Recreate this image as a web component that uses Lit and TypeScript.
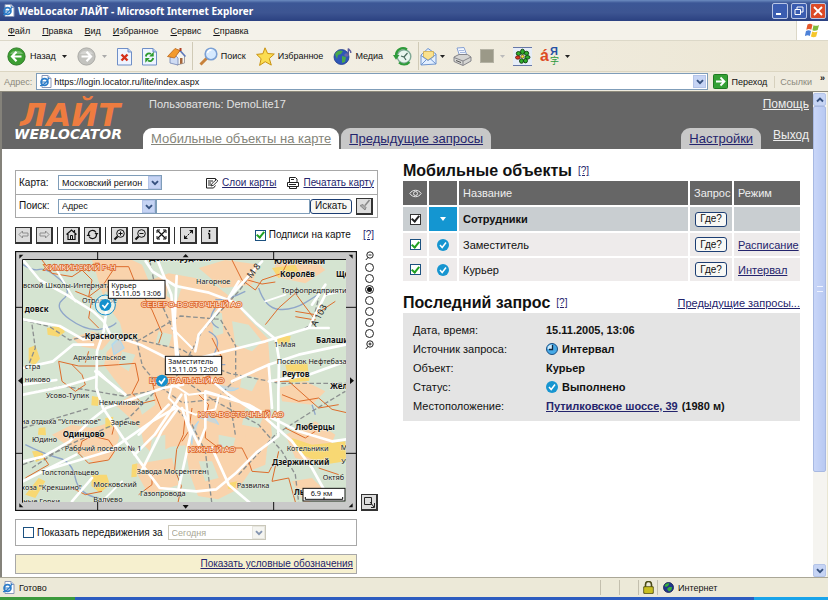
import { LitElement, html, css, svg } from "lit";
import { customElement, state } from "lit/decorators.js";
import { classMap } from "lit/directives/class-map.js";

/* ---------- browser icons ---------- */

const ieIcon = svg`<svg width="13" height="13" viewBox="0 0 13 13"><path d="M3 .5h6l3 3v9H3z" fill="#fff" stroke="#8a98b8"/><path d="M9 .5v3h3" fill="#dde6f5" stroke="#8a98b8"/><circle cx="5.500" cy="7" r="3.400" fill="none" stroke="#2b7cc9" stroke-width="1.800"/><path d="M3 7h5.500M1 10.500C4 11 9 6 10 2.500" fill="none" stroke="#2b7cc9" stroke-width="1.200"/></svg>`;

const circleArrow = (left: boolean) => svg`<svg width="19" height="19" viewBox="0 0 19 19"><circle cx="9.500" cy="9.500" r="8.600" fill=${left ? "#3d9f33" : "#c3c3bf"} stroke=${left ? "#2b7a24" : "#a9a9a5"}/><path d="M3 7a7 5 0 0 1 13 0z" fill="#fff" opacity=".3"/><path d=${left ? "M9.500 4.800 5 9.500l4.500 4.700M5.500 9.500h9" : "M9.500 4.800 14 9.500l-4.500 4.700M13.500 9.500h-9"} fill="none" stroke="#fff" stroke-width="2.200"/></svg>`;

const stopIcon = svg`<svg width="15" height="19" viewBox="0 0 15 19"><path d="M.5 1.500h10.500l3.500 3.500v13H.5z" fill="#eef4ff" stroke="#6f8fc7"/><path d="M11 1.500v3.500h3.500" fill="#b9cdf0" stroke="#6f8fc7"/><path d="m4.500 7.500 6 6m0-6-6 6" stroke="#d5301b" stroke-width="2.400"/></svg>`;
const refreshIcon = svg`<svg width="15" height="19" viewBox="0 0 15 19"><path d="M.5 1.500h10.500l3.500 3.500v13H.5z" fill="#eef4ff" stroke="#6f8fc7"/><path d="M11 1.500v3.500h3.500" fill="#b9cdf0" stroke="#6f8fc7"/><path d="M3.800 9.500c.5-3 3.200-3.800 5.200-2.500M11.200 11c-.5 3-3.200 3.800-5.200 2.500" fill="none" stroke="#2c9a2c" stroke-width="1.900"/><path d="M11.700 4.800v4.700H7.200zM3.300 15.700V11h4.500z" fill="#2c9a2c"/></svg>`;
const homeIcon = svg`<svg width="19" height="19" viewBox="0 0 19 19"><path d="M8 9 13 4l4.500 5v7L10 18z" fill="#f6f4ee" stroke="#8d8d96" stroke-width=".8"/><path d="M3 10.500 8 8l3 3v7l-8-2z" fill="#cfdcf4" stroke="#7285b5" stroke-width=".8"/><path d="M.5 9.500 8 1.500l5 2-5.500 7.500z" fill="#f39a2d" stroke="#b9651a" stroke-width=".8"/><path d="m13 3.500 5.500 6" stroke="#5a76bb" stroke-width="1.500"/><path d="M13 11h2.500v5.500L13 17z" fill="#a5663b"/><path d="M12.500 1h2v3h-2z" fill="#b04125"/></svg>`;
const searchIcon = svg`<svg width="19" height="19" viewBox="0 0 19 19"><path d="m8 11-6.500 6.500" stroke="#c8823c" stroke-width="3"/><circle cx="12" cy="7" r="5.800" fill="#d6eaff" stroke="#7ba0d4" stroke-width="1.600"/><path d="M8.500 6a3.800 3.800 0 0 1 4-3" fill="none" stroke="#fff" stroke-width="1.500"/></svg>`;
const starIcon = svg`<svg width="19" height="19" viewBox="0 0 19 19"><path d="m9 .8 2.600 5.700 6.700.5-5 4.500 2 6.600-6.100-3.400-5.600 3.700 1.500-6.700L.6 7.400l6.300-.7z" fill="#fbdd52" stroke="#c99313"/></svg>`;
const mediaIcon = svg`<svg width="19" height="19" viewBox="0 0 19 19"><circle cx="8.500" cy="10" r="7.500" fill="#2f57b8" stroke="#1e3c8a" stroke-width=".8"/><path d="M2 7c2-4 6-4 8-3l-2 3-3 1-1 4zM9 9l4 1-1 5-3 1z" fill="#48a84a"/><ellipse cx="13.500" cy="8" rx="2.200" ry="1.700" fill="#6a6aa6"/><path d="M15.300 8V1.500c.5 2 3 1.500 2.500 4.500" fill="none" stroke="#5b5b9c" stroke-width="1.400"/></svg>`;
const historyIcon = svg`<svg width="19" height="19" viewBox="0 0 19 19"><circle cx="11" cy="9.500" r="6.800" fill="#e9f5ee" stroke="#7fa895" stroke-width="1.400"/><path d="m8 9 3 1 3.500-4M11 10l2 3" fill="none" stroke="#496a5c" stroke-width="1.200"/><path d="M14 2.500C9-.8 2.500 3 3 9M6 15.500c3 3 8 2.500 10.500-.5" fill="none" stroke="#2f9b3b" stroke-width="2.200"/><path d="M0 8h6.500L3 12.800z" fill="#2f9b3b"/></svg>`;
const mailIcon = svg`<svg width="17" height="19" viewBox="0 0 17 19"><path d="M1 8 8 1.500 16 7v10L1 18z" fill="#e3efff" stroke="#6e95cf"/><path d="M3.500 4.500h10V10L8 13l-4.500-3z" fill="#fbe28c" stroke="#d1a63a" stroke-width=".7"/><path d="m1 8.500 7 5 8-6M1 18l6-6m9 5-6-5.500" fill="none" stroke="#6e95cf"/></svg>`;
const printIcon = svg`<svg width="19" height="19" viewBox="0 0 19 19"><path d="m4 1 7-.5 3 8H6.500z" fill="#f3f7ff" stroke="#86a0d2"/><path d="M6 3.500h5M7 5.500h5" stroke="#86a0d2" stroke-width=".7"/><path d="m1 10 5-2.500h8.500L18 10v4l-8 4.500-9-4z" fill="#d5d5d3" stroke="#85858a"/><path d="m1 10.500 9 3.500 8-4M10 14v4" fill="none" stroke="#85858a"/><path d="m3 13.500 5 2" stroke="#555" /></svg>`;
const flowerIcon = svg`<svg width="19" height="19" viewBox="0 0 19 19"><path d="M0 0h19v19H0z" fill="#e6edf8"/><path d="M0 .5h19M0 18.500h19" stroke="#6778a8"/><g fill="#2fae2c" stroke="#0d3d0c" stroke-width=".9"><ellipse cx="9.500" cy="4.800" rx="2" ry="2.600"/><ellipse cx="13.500" cy="6.300" rx="2.200" ry="2"/><ellipse cx="14.500" cy="10.300" rx="2.500" ry="1.800"/><ellipse cx="12.500" cy="13.700" rx="2" ry="2.200"/><ellipse cx="8.500" cy="14" rx="2" ry="2.300"/><ellipse cx="5.500" cy="6.500" rx="2.200" ry="2"/></g><ellipse cx="4.800" cy="10.500" rx="2.300" ry="1.700" fill="#dc3a24" stroke="#561008" stroke-width=".8"/><circle cx="9.500" cy="9.500" r="1.700" fill="#f7e236" stroke="#333" stroke-width=".6"/></svg>`;
const goIcon = svg`<svg width="15" height="15" viewBox="0 0 15 15"><rect x=".5" y=".5" width="14" height="14" rx="1" fill="#35a035" stroke="#1f7a22"/><path d="M3 7.500h8M7.500 3.500l4 4-4 4" fill="none" stroke="#fff" stroke-width="1.800"/></svg>`;
const winFlag = svg`<svg width="16" height="15" viewBox="0 0 16 15"><path d="M2.500 1.500c2-1.300 3.500-.8 5 .2L6.300 6.800c-1.500-1-3-1.200-5 0z" fill="#e5592b"/><path d="M8.500 2.200c2 1 3.800.8 5.500-.2l-1.300 5c-1.700 1-3.500 1-5.300.2z" fill="#7fba3c"/><path d="M1 8c2-1.200 3.500-1 5 0l-1.200 5C3.300 12 2 12-.2 13z" fill="#4d82d8"/><path d="M7.200 8.500c1.800 1 3.500 1 5.300 0l-1.300 5c-1.700 1-3.500 1-5.300 0z" fill="#f5c62c"/></svg>`;
const lockIcon = svg`<svg width="11" height="13" viewBox="0 0 11 13"><path d="M2.500 6V3.500a3 3 0 0 1 6 0V6" fill="none" stroke="#4a4a16" stroke-width="1.600"/><path d="M.8 5.800h9.400v6.500H.8z" fill="#e8dd23" stroke="#4e4a10"/><path d="M2 8h7M2 10h7" stroke="#9b9320" stroke-width=".8"/></svg>`;
const globeIcon = svg`<svg width="11" height="11" viewBox="0 0 11 11"><circle cx="5.500" cy="5.500" r="5" fill="#20358c" stroke="#111d50" stroke-width=".8"/><path d="M1.500 4c1-2.500 3-3 5-2.500L5 4 3 5zM6 5l3 0-.5 3-2.500 1.500L4 7z" fill="#37b03a"/></svg>`;
const drop = (c: string) => svg`<svg width="5" height="3" viewBox="0 0 5 3"><path d="M0 0h5L2.500 3z" fill=${c}/></svg>`;
const chevron = svg`<svg class="chev" width="12" height="12" viewBox="0 0 12 12"><path d="m3 4.200 3 3 3-3" fill="none" stroke="#35507e" stroke-width="1.900"/></svg>`;

/* ---------- page icons ---------- */

const okIcon = svg`<svg width="12" height="12" viewBox="0 0 12 12"><circle cx="6" cy="6" r="6" fill="#1795d0"/><path d="m3 6 2.200 2.500L9 3.500" fill="none" stroke="#fff" stroke-width="1.500"/></svg>`;
const clockIcon = svg`<svg width="12" height="12" viewBox="0 0 12 12"><circle cx="6" cy="6" r="5.500" fill="#46a9e6" stroke="#1b4f83"/><path d="M2 3.500a5 5 0 0 1 4-2v4.500H1.500z" fill="#cdeafb"/><path d="M6.500 2v4.500H3" fill="none" stroke="#10263f" stroke-width="1.300"/></svg>`;
const eyeIcon = svg`<svg width="13" height="9" viewBox="0 0 13 9"><path d="M.8 4.500C3.500.2 9.500.2 12.200 4.500 9.500 8.800 3.500 8.800.8 4.500z" fill="none" stroke="#e8e8e8"/><circle cx="6.500" cy="4.500" r="2" fill="none" stroke="#e8e8e8"/></svg>`;
const layersIcon = svg`<svg width="12" height="12" viewBox="0 0 12 12"><path d="M.5 1.500h9v3M.5 1.500v9.500h7l2-2.500M2 4h5M2 6h3M2 8h3" fill="none" stroke="#222"/><path d="m5 9 1-2.500 4.500-4 1.300 1.500L7.500 8.200z" fill="#fff" stroke="#222" stroke-width=".9"/></svg>`;
const printMapIcon = svg`<svg width="12" height="12" viewBox="0 0 12 12"><path d="M2.500 5V.5h6L10 2v3M.5 5.500h11v4H.5zM2.500 9.500v2h7v-2M4 2.500h3" fill="none" stroke="#222"/><path d="M2 7.500h7" stroke="#222"/></svg>`;

type Tool = { name: string; art: unknown; dim?: boolean; on?: boolean };
const tool = (art: unknown) => svg`<svg width="13" height="13" viewBox="0 0 13 13" fill="none" stroke="currentColor">${art}</svg>`;
const toolGroups: Tool[][] = [
  [
    { name: "Назад", dim: true, art: tool(svg`<path d="M2 6.500 5.500 3v2H11v3H5.500v2z"/>`) },
    { name: "Вперёд", dim: true, art: tool(svg`<path d="M11 6.500 7.500 3v2H2v3h5.500v2z"/>`) },
  ],
  [
    { name: "Домой", art: tool(svg`<path d="M1.500 6.500 6.500 2l5 4.500M3 6v5.500h7V6M9.500 4V2" stroke-width="1.200"/><path d="M5.500 11V7.500h2V11"/>`) },
    { name: "Обновить", art: tool(svg`<path d="M2.500 6a4 4 0 0 1 7.500-1.500M10.500 7a4 4 0 0 1-7.500 1.500" stroke-width="1.200"/><path d="M8.500 5h4L10.500 7.500zM.5 8h4L2.500 5.500z" fill="currentColor" stroke="none"/>`) },
  ],
  [
    { name: "Приблизить", art: tool(svg`<circle cx="7.500" cy="5.500" r="3.800"/><path d="M5.500 5.500h4M7.500 3.500v4"/><path d="m4.500 8.500-3 3" stroke-width="2"/>`) },
    { name: "Отдалить", art: tool(svg`<circle cx="7.500" cy="5.500" r="3.800"/><path d="M5.500 5.500h4"/><path d="m4.500 8.500-3 3" stroke-width="2"/>`) },
    { name: "Центр", on: true, art: tool(svg`<path d="m2.500 2.500 8 8m0-8-8 8" stroke-width="1.200"/><path d="M2 5V2h3M8 2h3v3M2 8v3h3M8 11h3V8"/>`) },
  ],
  [
    { name: "Расстояние", art: tool(svg`<path d="m3.500 9.500 6-6" stroke-dasharray="2 1"/><path d="M7 2h4v4zM2 7v4h4z" fill="currentColor" stroke="none"/>`) },
    { name: "Информация", art: tool(svg`<path d="M6.500 5.500V11M6.500 2v2M5 5.500h1.500" stroke-width="1.500"/>`) },
  ],
];

/* ---------- map data, in thirds of a pixel ---------- */

type Label = [string, number, number];
const towns: Label[] = [
  ["вской Школы-Интерната", 33, 121], ["Нагорное", 552, 109], ["Торфопредприяти", 808, 134],
  ["Архангельское", 184, 335], ["1-Мая", 786, 296], ["Поселок Нефтебаза", 794, 347],
  ["стра", 38, 363], ["никово", 38, 402], ["Усово-Тупик", 102, 451],
  ["Немчиновка", 260, 471], ["на отдыха \"Успенское\"", 26, 527], ["Заречье", 296, 531],
  ["Юдино", 60, 583], ["Рабочий поселок № 1", 158, 608], ["Завода Мосрентген", 374, 677],
  ["Толстопальцево", 88, 680], ["хоза \"Крекшино\"", 28, 727], ["Московский", 244, 716],
  ["Газопровода", 384, 743], ["Валуево", 244, 762], ["ные Горки", 34, 768],
  ["Развилка", 674, 721], ["Котельники", 824, 609], ["Октяб", 932, 695], ["Отрадное", 210, 164], ["М", 986, 605], ["У", 988, 647],
];
const cities: Label[] = [
  ["Юбилейный", 786, 47], ["Королёв", 804, 88], ["Ще", 972, 86], ["довск", 38, 193],
  ["Красногорск", 218, 272], ["Балаши", 912, 285], ["Реутов", 810, 387], ["Желе", 954, 422],
  ["Одинцово", 152, 568], ["Люберцы", 850, 545], ["Дзержинский", 780, 651], ["Лы", 846, 741],
  ["Долгопрудный", 412, 40],
];
const districts: Label[] = [
  ["ХИМКИНСКИЙ Р-Н", 96, 66], ["СЕВЕРО-ВОСТОЧНЫЙ АО", 388, 178], ["ЦЕНТРАЛЬНЫЙ АО", 412, 404],
  ["ЮГО-ВОСТОЧНЫЙ АО", 558, 508], ["ЮЖНЫЙ АО", 528, 612],
];

@customElement("region-map")
class RegionMap extends LitElement {
  static styles = css`
    :host { display: block; line-height: 0; }
    svg { width: 100%; height: auto; }
    text { font-family: "Noto Sans", sans-serif; }
    .towns text { font-size: 22px; fill: #111; stroke: #eef3ea; stroke-width: 2px; paint-order: stroke; }
    .cities text { font-size: 24px; font-weight: 700; fill: #111; stroke: #eef3ea; stroke-width: 3px; paint-order: stroke; }
    .districts text { font: 24px "Liberation Sans", sans-serif; fill: #fff4e8; stroke: #dc5f1e; stroke-width: 5px; paint-order: stroke; }
    .roads { fill: none; stroke: #fff; stroke-width: 8; stroke-linejoin: round; stroke-linecap: round; }
    .minor { stroke-width: 6; }
    .rail { fill: none; stroke: #8c9090; stroke-width: 4; stroke-dasharray: 14 7; }
    .edge { fill: none; stroke: #dd6d2c; stroke-width: 3; stroke-linejoin: round; }
    .river { fill: none; stroke: #8fa6c9; stroke-width: 4; }
    .callout { fill: #fff; stroke: #111; stroke-width: 3; }
    .note { font: 22px "Noto Sans", sans-serif; fill: #111; }
    .road-name { font-size: 27px; fill: #222; }
  `;

  private pin(x: number, y: number) {
    return svg`<circle cx=${x} cy=${y} r="18" fill="#1590cd"/><path d="M${x - 9} ${y}l7 8 11-15" fill="none" stroke="#fff" stroke-width="5"/>`;
  }

  render() {
    return html`<svg viewBox="9 9 1026 780" role="img" aria-label="Карта Московского региона">
      <defs><clipPath id="view"><rect x="33" y="36" width="969" height="726"/></clipPath></defs>
      <rect x="10.500" y="10.500" width="1023" height="777" fill="#c9c9c9" stroke="#111" stroke-width="4"/>
      <path d="M257 9v27M785 9v27M257 762v27M785 762v27M9 178h24M9 616h24M1002 178h33M1002 616h33" stroke="#111" stroke-width="3"/>
      <path d="M22 20h12l-12 12zM1022 20h-12l12 12zM22 778v-12l12 12zM1022 778v-12l-12 12zM521 18l9 10h-18zM521 782l9-11h-18zM18 398l12-10v20zM1026 398l-12-10v20z" fill="#111"/>
      <g clip-path="url(#view)">
        <rect x="33" y="36" width="969" height="726" fill="#d5e4d1"/>
        <g fill="#f9d3ac">
          <path d="M240 36h120l30 14 20 48 60-22 80 14 60 22 52 40 38 50 68 70 8 110-2 120 6 60-16 42-46 62-40 58-60 30-60-10-26-70-12-82-44 4-50 26-30-30-10-48-36-38-40-36 40-24-44-54-30-40 8-40 50-48-10-40-44-60z"/>
          <path d="M180 270l60-20 60 20-30 36-60-10zM120 560l60-30 60 10 66-20 16 50-22 60-50 14-60-34zM790 36h120l30 30-60 40-90-20zM560 60l80-24 100 14-20 60-90 10zM800 420l80-20 60 30-40 40-90-10zM820 560l90-40 60 40-40 90-80-20zM840 700l60-10 40 40-60 40zM360 650l120-20 20 80-90 30zM700 560l70 0-10 90-50 20z"/>
        </g>
        <g fill="#d5e4d1">
          <path d="M660 220l50 10 40 50-30 30-50-20zM600 190l30 6 4 60-30 10zM370 440l50-10 10 40-40 30zM470 100l40 14-16 50-30-20zM700 480l60 10-20 50-50-10zM620 560l50 10-10 40-40-10zM280 130l40 20-20 40-30-20zM560 640l40 0 20 50-40 10zM440 250l40 10-10 36-40-10zM690 380l50 10-20 40-36-12zM420 570l40-10 0 50-50 30zM330 310l40 10-20 50-30-20z"/>
        </g>
        <g fill="#f8d873">
          <path d="M105 240l40-8 14 20-20 14-32-6zM50 300l20-8 14 40-18 22-16-14zM820 350l66-6 6 54-60 6zM840 570l60 20 100-10 2 60-70 10-80-40zM240 444l22 4-4 26-20-2zM280 510l24-4-4 30-20 8zM60 610l30-2 8 24-26 10zM360 650l16-4-2 40-16 2zM240 680l44 0 10 30-30 24-26-20zM80 540l20-2 2 24-24-2zM646 706l30-6-8 26-20-4zM800 264l36 0-4 20-40 4zM780 60l70-10 10 20-60 20zM40 740l40-50 20 10-30 50z"/>
        </g>
        <path d="M300 290l20-20 16 30-30 20zM560 510q40-20 60 20M620 410q30 30 60 10M540 590q-10-40 20-70" fill="#b3d9ee" stroke="#b3d9ee" stroke-width="4" fill-opacity=".6"/>
        <path class="river" d="M33 50q30 20 50 14t60 30 10 60 20 60 90 30 50-20M740 120q20 60 60 64t80-20 60-40M590 250q40 20 20 60t30 40M40 590q60 30 100 40t50 60 70 60M700 130q-60 30-90 24M610 180q-30 40 10 60M900 470l10 30"/>
        <g class="rail">
          <path d="M33 216l80 20 60 40 90-20 60 20 60 0 130 30 60 40 80 30 150 30h200M33 440l120-26 180 30 120-20 60-60-30-120-50-110-20-98M510 360l60-110 110-120 70-94M60 230l10 70-20 50M60 660l90-60 110-50 90-40 80-80M33 650l120-46M520 400l90 60 130 70 70 80 40 70 10 84M480 470l60 60 40 80 20 160M375 280l130-76 120 10 46 80 0 100-60 60-100 10-70-50-50-60zM670 560l-20-120M680 680l110-120 110-70 100-60M860 250l40-20 20-80M33 540l200-60"/>
        </g>
        <g class="edge">
          <path d="M90 36l30 40 60 10 30-20 30 30-10 50 40-30 40-60 40 0 20 50 50 80 30 70-10 30"/>
          <path d="M190 130l50 20-10 60 30 30M180 350l30 30 10 30-30 20-40-30-10-60 60 14 60 0 60-4 50-4 10 50-20 40 30 30 40-10"/>
          <path d="M520 500l-6 60-20 44-6 60 20 50-10 50M580 490l0 80 40 30 70 0 20 40 10 30 50 4 20-40M660 36l30 60 40 30 20-30 60-20 20-40M700 94l50 14 40-6M760 230l40-50 50-44 60 80-60-10M810 440l50 20 60-10 40 34 44 10M780 400l50 0 90 80 60-10M820 540l60 30 30-20"/>
          <path d="M210 580l30-16 50 12 20 30-20 30-60 10-30-30zM230 310l-10 34M300 560l10-40M800 610l-20 90 50-10 20 72M920 660l60 20M40 690l70-40-20-30M380 740l40-30 0-30M180 720l40 20 50-10M970 160l-60 40-60-10"/>
          <path d="M540 480l-10 70-20 30M420 400l10 40 20 50M600 270l30 60-10 40M560 440l30 30-10 40"/>
        </g>
        <g class="roads">
          <path d="M33 36l50 60 80 44 80 50 32 30 20 40 90 30 80 40 50 40M283 190l-8 60-20 60-2 110 20 60 60 90 50 70 60 80 110 10 60-6 60-50 60-60 66-50 0-120 2-110-10-60-60-50-60-60-80-30-100-20-70-44-20-30"/>
          <path d="M33 214l110 20 70 40 100-14M33 440l120-24 100-30M33 360l90-20 60-50 60 0M33 640l60-14 80-46 60-60 50-40 170-60 60-10M90 670l200-60 130-90 70-40"/>
          <path d="M368 620l60-60 80-120M388 670l60-120 50-70M380 560l90-90M500 720l36-160-26-80M560 590l20-50 0-110M520 440l10 90 30 60M494 340l-16-200-40-100M494 84l-6 140 10 100M550 310l10-50 90-110 100-110M650 150l30-50M520 330l70 60 60 50 110 70 80 70 60 80 50 90M580 430l130 40 70 40 80 40 100 30 42-6M660 400l110-50 90-30 140-30M560 330l200-50 130-40 50-100 60-14M890 240l60 0M780 480l-10-130M770 400l120-20 112-40M33 410l100-14M600 600l50 110 70 60M180 760l60-70M33 700l160-80M250 370l90 70M900 170l40-60"/>
          <path class="minor" d="M500 420l30 20 50-6 40 10-10 40-60 16-50-20-30-30 10-40zM260 370l60 60M480 240l60 60M270 760l60-60M130 60l60 100M760 160l60-20"/>
        </g>
        <g class="towns">${towns.map(([t, x, y]) => svg`<text x=${x} y=${y}>${t}</text>`)}</g>
        <g class="cities">${cities.map(([t, x, y]) => svg`<text x=${x} y=${y}>${t}</text>`)}</g>
        <g class="districts">${districts.map(([t, x, y]) => svg`<text x=${x} y=${y}>${t}</text>`)}</g>
        <text class="road-name" transform="translate(718 92) rotate(-52)">М 8</text>
        <text class="road-name" transform="translate(912 238) rotate(-62)">А 103</text>
      </g>
      <path d="M31.500 764V34.500H1002" fill="none" stroke="#111" stroke-width="3"/>
      <circle cx="280" cy="171" r="30" fill="#fff" fill-opacity=".5" stroke="#1590cd" stroke-width="3"/>
      ${this.pin(280, 171)}${this.pin(450, 398)}
      <rect class="callout" x="289" y="97" width="170" height="54"/>
      <text class="note" x="298" y="120">Курьер</text><text class="note" x="298" y="145">15.11.05 13:06</text>
      <rect class="callout" x="460" y="325" width="169" height="55"/>
      <text class="note" x="468" y="348">Заместитель</text><text class="note" x="468" y="373">15.11.05 12:00</text>
      <rect class="callout" x="873" y="721" width="126" height="38"/>
      <text class="note" x="896" y="743">6.9 км</text>
      <path d="M880 747v7h112v-7M936 748v6" fill="none" stroke="#111" stroke-width="3"/>
    </svg>`;
  }
}

@customElement("app-root")
class AppRoot extends LitElement {
  @state() private zoom = 2;

  static styles = css`
    :host {
      display: flex; flex-direction: column; height: 100vh; overflow: hidden;
      background: #fff; color: #111; font: 11px/14px "Liberation Sans", Arial, sans-serif;
    }
    * { box-sizing: border-box; }
    svg { display: block; flex: none; }
    button { font: inherit; color: inherit; margin: 0; padding: 0; border: 0; background: none; }
    a { color: #24246c; text-decoration: underline; }
    h2 { margin: 0; font: bold 16px/20px "Liberation Sans", Arial, sans-serif; }
    input, select { font: inherit; color: inherit; margin: 0; }

    /* browser window */
    .chrome { font: 9px/12px "Liberation Sans", Tahoma, sans-serif; flex: none; }
    .chrome > div { display: flex; align-items: center; }
    .title { height: 21px; padding: 0 2px; gap: 3px; background: linear-gradient(#6c8cc0 0, #3c5796 3px, #3d5592 60%, #2b4181); color: #fff; font: bold 10px/12px "Noto Sans", sans-serif; }
    .title span { flex: 1; }
    .win { width: 16px; height: 16px; border: 1px solid #b9c6e6; border-radius: 2px; background: #3a5cb0; display: grid; place-items: center; }
    .win.close { background: #dc4a26; }
    .menu { height: 20px; padding-left: 8px; gap: 12px; background: #f4f2ea; border-bottom: 1px solid #dcd8c8; }
    .menu nav { display: flex; gap: 12px; flex: 1; }
    .menu u { text-underline-offset: 1px; }
    .flag { width: 32px; align-self: stretch; background: #fff; display: grid; place-items: center; border-left: 1px solid #dcd8c8; }
    .tools { height: 31px; padding-left: 7px; background: linear-gradient(90deg, #f6f4ed, #ece6d4); border-bottom: 1px solid #dcd6c2; }
    .group { display: flex; align-items: center; gap: 10px; }
    .group.tight { gap: 8px; margin-left: 5px; }
    .group button { display: flex; align-items: center; gap: 3px; }
    .group .wide { gap: 4px; }
    .group .wide svg + svg, .group span + svg { margin-left: 2px; }
    .sep { width: 1px; height: 28px; background: #d0cab6; margin: 0 -4px; }
    .square { width: 14px; height: 14px; background: #9b9988; border: 1px solid #b4b2a4; }
    .lang { position: relative; width: 20px; height: 20px; color: #dd4a22; font: bold 16px/20px "Liberation Sans", sans-serif; text-align: left; }
    .lang i { position: absolute; left: 10px; top: 0; font: bold 11px/11px "Liberation Sans", sans-serif; color: #2450a4; }
    .lang b { position: absolute; left: 10px; top: 9px; font: 9px/11px "Noto Sans CJK SC", sans-serif; color: #2c9a3a; }
    .address { height: 20px; padding: 0 3px 0 4px; gap: 4px; background: #efebde; border-bottom: 1px solid #8d8a7c; color: #111; }
    .muted { color: #8a887c; }
    .url { flex: 1; height: 17px; display: flex; align-items: center; gap: 2px; padding: 0 1px 0 2px; background: #fff; border: 1px solid #7f9db9; }
    .url input { flex: 1; min-width: 0; border: 0; padding: 0; background: none; outline: 0; }
    .arrow { width: 13px; height: 13px; background: #c6d4f4; border: 1px solid #b4c4e8; display: grid; place-items: center; }
    .go { display: flex; align-items: center; gap: 4px; margin-left: 1px; }
    .links { border-left: 1px solid #d6d0bd; padding-left: 5px; margin-left: 3px; }
    .more { font-weight: 700; margin-left: 4px; align-self: flex-start; }

    /* page viewport and scrollbar */
    .viewport { flex: 1; min-height: 0; display: flex; border-left: 2px solid #84827a; border-right: 1px solid #e9e6d2; }
    .page { flex: 1; min-width: 0; overflow: hidden; background: #fff; }
    .scroll { width: 14px; display: flex; flex-direction: column; background: #f5f4f0; padding-top: 1px; }
    .scroll .arrow { flex: none; width: 13px; height: 13px; border-radius: 2px; }
    .thumb { flex: 365; width: 13px; background: linear-gradient(90deg, #c9d6f8, #b8c9f2); border: 1px solid #a8b9e2; border-radius: 2px; display: grid; place-items: center; }
    .thumb i { width: 6px; height: 6px; border: solid #eef2ff; border-width: 1px 0; }
    .track { flex: 92; }

    /* service header */
    .head { display: flex; height: 57px; background: #666; color: #e2e2e2; padding-right: 4px; }
    .logo { width: 141px; padding: 10px 0 0 12px; display: flex; flex-direction: column; text-decoration: none; font-family: "DejaVu Sans", sans-serif; font-style: italic; font-weight: 700; }
    .logo .big { font-size: 32px; line-height: 26px; color: #ee7c40; padding-left: 6px; }
    .logo .small { font-size: 14px; line-height: 12px; color: #fff; }
    .bar { flex: 1; display: flex; flex-direction: column; justify-content: space-between; }
    .bar > div { display: flex; justify-content: space-between; }
    .who { padding: 5px 0 0 6px; }
    .bar a.plain { color: #eee; font-size: 12px; line-height: 14px; }
    .tabs { display: flex; gap: 2px; align-items: flex-end; flex: 1; }
    .tab { height: 21px; padding: 0 8px; border-radius: 9px 9px 0 0; background: #c8c8c8; font-size: 13px; line-height: 22px; }
    .tab.on { background: #fff; color: #85857a; }
    .right { margin-left: auto; margin-right: 12px; }

    /* columns */
    .cols { display: grid; grid-template-columns: minmax(0, 363fr) minmax(0, 397fr); gap: 25px; padding: 12px 13px 0 13px; align-items: start; }
    .left { font-size: 10px; }
    .find { margin-top: 9px; border: 1px solid #a8a8a8; }
    .row { display: flex; align-items: center; height: 23px; padding: 0 3px; }
    .row + .row { border-top: 1px solid #a8a8a8; }
    .row > label { width: 39px; }
    .pick { position: relative; display: block; width: 104px; font: 9px/12px "Liberation Sans", Tahoma, sans-serif; }
    .pick select { appearance: none; width: 100%; height: 15px; padding: 0 14px 0 3px; border: 1px solid #7f9db9; border-radius: 0; background: #fff; outline: 0; }
    .pick .arrow { position: absolute; right: 1px; top: 1px; pointer-events: none; }
    .pick.narrow { width: 98px; }
    .pick.off select { color: #a8a694; border-color: #c9c7ba; opacity: 1; }
    .pick.off .arrow { background: #f0efe8; border-color: #d8d6ca; opacity: .6; }
    .act { display: flex; align-items: center; gap: 4px; margin-left: 11px; }
    .push { margin-left: auto; }
    .query { flex: 1; min-width: 0; height: 15px; border: 1px solid #7f9db9; border-radius: 0; padding: 0 3px; outline: 0; }
    .btn { height: 15px; padding: 0 4px; border: 1px solid #1c3e73; border-radius: 3px; background: #f8f8f5; line-height: 12px; font-size: 10px; }
    .sq { width: 17px; height: 17px; flex: none; display: grid; place-items: center; background: #ddd; border: 1px solid #333; border-right-width: 2px; border-bottom-width: 2px; color: #111; }
    .sq.dim { color: #8d8d8d; }
    .sq.on { background: #fff; }
    .brush { margin: 0 1px 0 4px; }
    .mapbar { display: flex; align-items: center; margin-top: 8px; height: 18px; padding-right: 4px; }
    .set { display: flex; gap: 4px; }
    .set + .set { border-left: 1px solid #333; margin-left: 4px; padding-left: 5px; }
    .tick { appearance: none; flex: none; width: 11px; height: 11px; border: 1px solid #1c5180; background: #fff; display: grid; place-items: center; }
    .tick:checked::after { content: ""; width: 3px; height: 6px; border: solid #21a121; border-width: 0 2px 2px 0; transform: translateY(-1px) rotate(40deg); }
    .tick.dark { border-color: #333; }
    .tick.dark:checked::after { border-color: #222; }
    .lab { display: flex; align-items: center; gap: 3px; }
    .q { font-size: 10px; }
    .mapbar .q { margin-left: 12px; }
    .mapwrap { display: grid; grid-template-columns: minmax(0, 342fr) minmax(0, 21fr); margin-top: 7px; }
    .side { display: flex; flex-direction: column; align-items: flex-end; justify-content: space-between; }
    .levels { display: flex; flex-direction: column; align-items: center; gap: 2px; width: 17px; }
    .levels input { appearance: none; width: 9px; height: 9px; margin: 0; border: 1px solid #222; border-radius: 50%; display: grid; place-items: center; }
    .levels input:checked::after { content: ""; width: 5px; height: 5px; border-radius: 50%; background: #111; }
    .below { margin-right: 21px; border: 1px solid #a8a8a8; margin-top: 8px; height: 27px; display: flex; align-items: center; padding: 0 7px; gap: 5px; }
    .legend { height: 20px; background: #f6f0cf; justify-content: flex-end; padding: 0 3px; }

    /* objects table */
    .hd { display: flex; align-items: center; gap: 6px; }
    table { width: calc(100% + 4px); margin: -2px; border-spacing: 2px; table-layout: fixed; }
    th, td { padding: 0 4px; height: 23px; text-align: left; font-weight: 400; background: #eeebeb; overflow: hidden; white-space: nowrap; }
    th { height: 24px; background: #666; color: #eee; }
    .grp td { height: 24px; background: #c9ced1; font-weight: 700; }
    .grp .open { background: #1496d1; }
    .c { padding: 0; }
    .c > * { margin: 0 auto; }
    .w1 { width: 24px; } .w2 { width: 28px; } .w4 { width: 42px; } .w5 { width: 66px; }
    .open button { display: grid; place-items: center; width: 100%; height: 16px; }
    .where { display: block; font-weight: 400; }
    .second { margin-top: 12px; }
    .all { margin-left: auto; }
    dl { margin: 0; background: #e4e4e4; padding: 8px 10px 6px; display: grid; grid-template-columns: 133px 1fr; min-height: 108px; }
    dt, dd { margin: 0; display: flex; align-items: center; min-height: 18px; gap: 4px; }
    dd { font-weight: 700; }

    /* status */
    .status { flex: none; height: 20px; background: #ece9d8; border-top: 1px solid #aaa797; display: flex; align-items: center; gap: 4px; padding-left: 2px; font: 9px/12px "Liberation Sans", Tahoma, sans-serif; }
    .status .cell { border-left: 1px solid #c3bfae; height: 15px; width: 19px; display: flex; align-items: center; justify-content: center; margin-right: -4px; }
    .status .zone { width: 171px; justify-content: flex-start; gap: 4px; padding-left: 5px; margin-right: 0; }
    .grow { flex: 1; }
    .task { flex: none; height: 3px; display: flex; background: #2d5cc0; }
    .start { width: 75px; background: #3c9a3c; }
    .tray { width: 74px; margin-left: auto; background: #19a4ea; }
  `;

  private select(opts: { id: string; value: string; cls?: string; off?: boolean }) {
    return html`<span class="pick ${opts.cls ?? ""}"><select id=${opts.id} ?disabled=${opts.off} aria-label=${opts.id}><option>${opts.value}</option></select><span class="arrow">${chevron}</span></span>`;
  }

  private member(name: string, mode: string) {
    return html`<tr>
      <td class="c"><input class="tick" type="checkbox" checked aria-label=${name}></td>
      <td class="c">${okIcon}</td><td>${name}</td>
      <td class="c"><button class="btn where">Где?</button></td>
      <td><a href="#mode">${mode}</a></td></tr>`;
  }

  private browser() {
    const menu = [["Ф", "айл"], ["П", "равка"], ["В", "ид"], ["И", "збранное"], ["С", "ервис"], ["С", "правка"]];
    return html`<header class="chrome">
      <div class="title">${ieIcon}<span>WebLocator ЛАЙТ - Microsoft Internet Explorer</span>
        <button class="win" aria-label="Свернуть"><svg width="10" height="10"><path d="M1 8h5" stroke="#fff" stroke-width="2"/></svg></button>
        <button class="win" aria-label="Восстановить"><svg width="10" height="10"><path d="M3 3V1h6v5H7M1 3.500h5.500v5H1z" fill="none" stroke="#fff"/></svg></button>
        <button class="win close" aria-label="Закрыть"><svg width="10" height="10"><path d="m1 1 8 8m0-8-8 8" stroke="#fff" stroke-width="1.800"/></svg></button>
      </div>
      <div class="menu"><nav>${menu.map(([a, b]) => html`<span><u>${a}</u>${b}</span>`)}</nav><span class="flag">${winFlag}</span></div>
      <div class="tools">
        <div class="group">
          <button class="wide">${circleArrow(true)}<span>Назад</span>${drop("#222")}</button>
          <button class="wide" aria-label="Вперёд">${circleArrow(false)}${drop("#aaa")}</button>
          <button aria-label="Остановить">${stopIcon}</button>
          <button aria-label="Обновить">${refreshIcon}</button>
          <button aria-label="Домой">${homeIcon}</button>
          <span class="sep"></span>
          <button>${searchIcon}<span>Поиск</span></button>
          <button>${starIcon}<span>Избранное</span></button>
          <button>${mediaIcon}<span>Медиа</span></button>
          <button aria-label="Журнал">${historyIcon}</button>
          <span class="sep"></span>
        </div>
        <div class="group tight">
          <button aria-label="Почта">${mailIcon}${drop("#222")}</button>
          <button aria-label="Печать">${printIcon}</button>
          <button class="wide" aria-label="Правка"><span class="square"></span>${drop("#bbb")}</button>
          <button aria-label="ICQ">${flowerIcon}</button>
          <button aria-label="Перевод"><span class="lang">á<i>Я</i><b>字</b></span>${drop("#222")}</button>
        </div>
      </div>
      <div class="address"><label class="muted" for="url">Адрес:</label>
        <span class="url">${ieIcon}<input id="url" value="https://login.locator.ru/lite/index.aspx"><button class="arrow" aria-label="Список">${chevron}</button></span>
        <button class="go">${goIcon}Переход</button><span class="links muted">Ссылки</span><span class="more">»</span>
      </div>
    </header>`;
  }

  private mapPanel() {
    const lens = (plus: boolean) => svg`<svg width="9" height="10" viewBox="0 0 9 10" fill="none" stroke="#222"><circle cx="5" cy="4" r="3.200"/><path d="M3.500 4h3M.8 9l2.200-2.500"/>${plus ? svg`<path d="M5 2.500v3"/>` : ""}</svg>`;
    return html`<section class="left">
      <div class="find">
        <div class="row"><label for="map">Карта:</label>${this.select({ id: "map", value: "Московский регион" })}
          <span class="act push">${layersIcon}<a href="#layers">Слои карты</a></span>
          <span class="act">${printMapIcon}<a href="#print">Печатать карту</a></span></div>
        <div class="row"><label for="kind">Поиск:</label>${this.select({ id: "kind", value: "Адрес", cls: "narrow" })}
          <input class="query" aria-label="Строка поиска"><button class="btn">Искать</button>
          <button class="sq dim brush" aria-label="Очистить"><svg width="13" height="13" viewBox="0 0 13 13"><path d="M11.500 1 7 6.500" stroke="#888" stroke-width="1.500"/><path d="M2 6.500 5 5.500l3 3L7 11z" fill="#aaa" stroke="#888"/></svg></button></div>
      </div>
      <div class="mapbar">
        ${toolGroups.map((g) => html`<div class="set">${g.map((t) => html`<button class=${classMap({ sq: true, dim: !!t.dim, on: !!t.on })} aria-label=${t.name}>${t.art}</button>`)}</div>`)}
        <label class="lab push"><input class="tick" type="checkbox" checked>Подписи на карте</label><a class="q" href="#help">[?]</a>
      </div>
      <div class="mapwrap"><region-map></region-map>
        <div class="side"><div class="levels">${lens(false)}
          ${[0, 1, 2, 3, 4, 5, 6].map((n) => html`<input type="radio" name="zoom" aria-label="Масштаб ${n}" .checked=${n === this.zoom} @change=${() => (this.zoom = n)}>`)}${lens(true)}</div>
          <button class="sq" aria-label="Размер карты"><svg width="13" height="13" viewBox="0 0 13 13" fill="none" stroke="#222"><path d="M1.500 1.500h7v7h-7zM8 11.500h3.500V7M7 6l4 5"/></svg></button></div>
      </div>
      <div class="below"><label class="lab"><input class="tick" type="checkbox">Показать передвижения за</label>${this.select({ id: "period", value: "Сегодня", cls: "narrow off", off: true })}</div>
      <div class="below legend"><a href="#legend">Показать условные обозначения</a></div>
    </section>`;
  }

  private objects() {
    return html`<section>
      <div class="hd"><h2>Мобильные объекты</h2><a class="q" href="#help">[?]</a></div>
      <table>
        <tr><th class="c w1">${eyeIcon}</th><th class="w2"></th><th>Название</th><th class="w4">Запрос</th><th class="w5">Режим</th></tr>
        <tr class="grp"><td class="c"><input class="tick dark" type="checkbox" checked aria-label="Сотрудники"></td>
          <td class="c open"><button aria-label="Свернуть группу"><svg width="6" height="4"><path d="M0 0h6L3 4z" fill="#fff"/></svg></button></td><td>Сотрудники</td>
          <td class="c"><button class="btn where">Где?</button></td><td></td></tr>
        ${this.member("Заместитель", "Расписание")}${this.member("Курьер", "Интервал")}
      </table>
      <div class="hd second"><h2>Последний запрос</h2><a class="q" href="#help">[?]</a><a class="all" href="#history">Предыдущие запросы...</a></div>
      <dl>
        <dt>Дата, время:</dt><dd>15.11.2005, 13:06</dd>
        <dt>Источник запроса:</dt><dd>${clockIcon}Интервал</dd>
        <dt>Объект:</dt><dd>Курьер</dd>
        <dt>Статус:</dt><dd>${okIcon}Выполнено</dd>
        <dt>Местоположение:</dt><dd><a href="#place">Путилковское шоссе, 39</a>(1980 м)</dd>
      </dl>
    </section>`;
  }

  render() {
    return html`${this.browser()}
      <div class="viewport">
        <main class="page">
          <div class="head">
            <a class="logo" href="#home"><span class="big">ЛАЙТ</span><span class="small">WEBLOCATOR</span></a>
            <div class="bar">
              <div><span class="who">Пользователь: DemoLite17</span><a class="plain who" href="#help">Помощь</a></div>
              <div><nav class="tabs"><a class="tab on" href="#map">Мобильные объекты на карте</a><a class="tab" href="#requests">Предыдущие запросы</a><a class="tab right" href="#settings">Настройки</a></nav><a class="plain" href="#exit">Выход</a></div>
            </div>
          </div>
          <div class="cols">${this.mapPanel()}${this.objects()}</div>
        </main>
        <div class="scroll"><button class="arrow" aria-label="Вверх"><svg width="12" height="12" viewBox="0 0 12 12"><path d="m3 7.500 3-3 3 3" fill="none" stroke="#35507e" stroke-width="1.900"/></svg></button>
          <div class="thumb"><i></i></div><div class="track"></div><button class="arrow" aria-label="Вниз">${chevron}</button></div>
      </div>
      <footer class="status">${ieIcon}<span>Готово</span><span class="grow"></span>
        <span class="cell"></span><span class="cell"></span><span class="cell">${lockIcon}</span><span class="cell zone">${globeIcon}Интернет</span></footer>
      <div class="task"><span class="start"></span><span class="tray"></span></div>`;
  }
}
